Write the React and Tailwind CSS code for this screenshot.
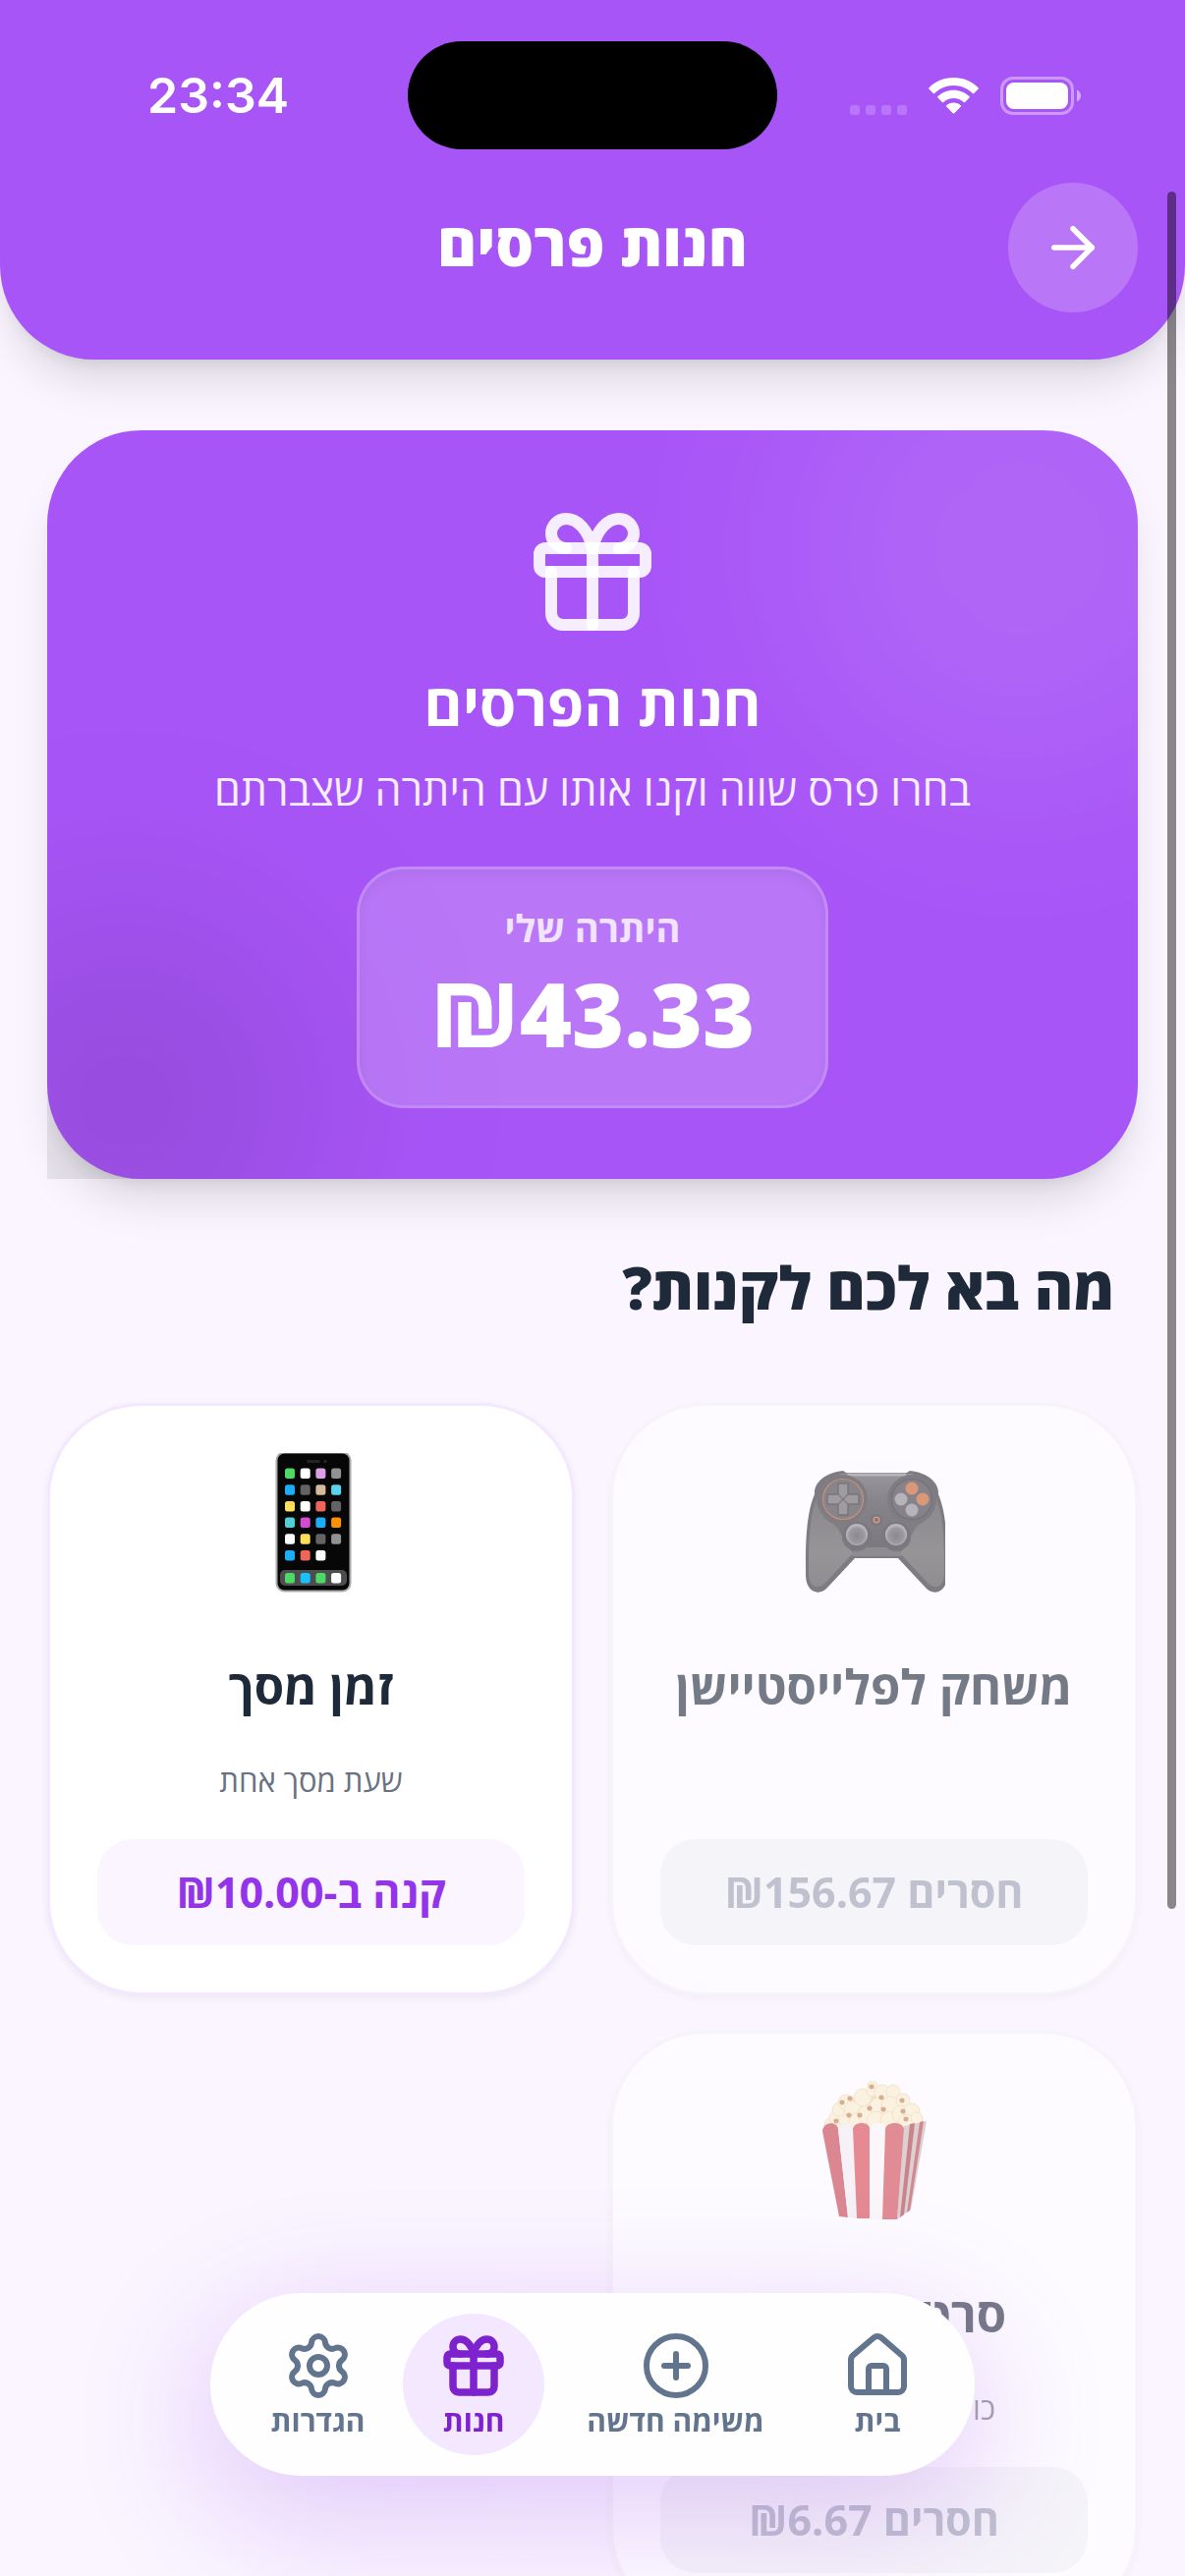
import { ArrowRight, CirclePlus, House, Settings } from "lucide-react";

const rewards = [
  {
    id: 1,
    title: "משחק לפלייסטיישן",
    desc: "",
    action: "חסרים ₪156.67",
    picture: Gamepad,
    locked: true,
  },
  {
    id: 2,
    title: "זמן מסך",
    desc: "שעת מסך אחת",
    action: "קנה ב-₪10.00",
    picture: Phone,
    locked: false,
  },
  {
    id: 3,
    title: "סרט בקולנוע",
    desc: "כולל פופקורן ושתייה",
    action: "חסרים ₪6.67",
    picture: Popcorn,
    locked: true,
  },
];

function GiftIcon({ className, strokeWidth = 2 }) {
  return (
    <svg
      viewBox="0 0 24 24"
      className={className}
      fill="none"
      stroke="currentColor"
      strokeWidth={strokeWidth}
      strokeLinecap="round"
      strokeLinejoin="round"
      aria-hidden="true"
    >
      <rect x="3" y="8" width="18" height="4" rx="1" />
      <path d="M12 8v13" />
      <path d="M19 12v7a2 2 0 0 1-2 2H7a2 2 0 0 1-2-2v-7" />
      <path d="M7.5 8a2.5 2.5 0 0 1 0-5A4.8 8 0 0 1 12 8a4.8 8 0 0 1 4.5-5 2.5 2.5 0 0 1 0 5" />
    </svg>
  );
}

function Phone() {
  const rows = [
    ["#4cd964", "#ffffff", "#dda0e6", "#929292"],
    ["#1badf8", "#636366", "#d4bb9c", "#5ad4ee"],
    ["#ffdf5c", "#ffffff", "#ee6559", "#636366"],
    ["#4dd0d8", "#d24bd0", "#1badf8", "#ff9000"],
    ["#ffffff", "#ffdf5c", "#636366", "#929292"],
    ["#1badf8", "#ee6559", "#ffffff"],
  ];
  const dock = ["#4cd964", "#18c1f8", "#4cd964", "#ffffff"];
  return (
    <svg viewBox="-2 4 144 144" className="size-36" aria-hidden="true">
      <rect x="33.5" y="2.5" width="77" height="143" rx="9" fill="#a9a9ab" />
      <rect x="35.5" y="4.5" width="73" height="139" rx="7" fill="#070707" />
      <rect x="65" y="11" width="14" height="3" rx="1.5" fill="#242424" />
      <circle cx="84" cy="12.5" r="1.8" fill="#242424" />
      <rect x="38" y="123" width="68" height="16" rx="5" fill="#4d4d4f" />
      {rows.map((row, y) =>
        row.map((color, x) => (
          <rect
            key={`${x}-${y}`}
            x={43 + x * 15.7}
            y={19.5 + y * 16.7}
            width="10"
            height="10.5"
            rx="2.5"
            fill={color}
          />
        ))
      )}
      {dock.map((color, x) => (
        <rect key={x} x={43 + x * 15.7} y="126" width="10" height="10.5" rx="2.5" fill={color} />
      ))}
    </svg>
  );
}

function Gamepad() {
  return (
    <svg viewBox="-2 0 144 144" className="size-36" aria-hidden="true">
      <defs>
        <linearGradient id="padBody" x1="0" y1="0" x2="0" y2="1">
          <stop offset="0" stopColor="#56575a" />
          <stop offset="0.4" stopColor="#3a3a3d" />
          <stop offset="1" stopColor="#28282b" />
        </linearGradient>
        <linearGradient id="padGrip" x1="0" y1="0" x2="0" y2="1">
          <stop offset="0" stopColor="#414142" />
          <stop offset="0.6" stopColor="#555552" />
          <stop offset="1" stopColor="#4a4a48" />
        </linearGradient>
        <radialGradient id="padStick" cx="0.5" cy="0.55" r="0.5">
          <stop offset="0" stopColor="#434345" />
          <stop offset="0.7" stopColor="#5e5e60" />
          <stop offset="1" stopColor="#939396" />
        </radialGradient>
      </defs>
      <path
        d="M9 42C8 30 20 20 38 18L41 20H103L106 18C124 20 136 30 135 42C141 56 144 76 144 112V124C144 142 130 146 122 137L94 107H50L22 137C14 146 0 142 0 124V112C0 76 3 56 9 42Z"
        fill="#2c2c2d"
      />
      <path
        d="M11 46C5 62 3 82 3 112V123C3 136 13 140 20 132L48 102L32 74C20 70 12 60 11 46Z"
        fill="url(#padGrip)"
      />
      <path
        d="M133 46C139 62 141 82 141 112V123C141 136 131 140 124 132L96 102L112 74C124 70 132 60 133 46Z"
        fill="url(#padGrip)"
      />
      <path d="M36 21H108L130 40V60L112 76L100 96H44L32 76L14 60V40Z" fill="url(#padBody)" />
      <path d="M50 96H94L98 105H46Z" fill="#474748" />
      <path d="M42 22H102" stroke="#8b8d90" strokeWidth="3" />
      <circle cx="38" cy="47" r="25" fill="#2f2f32" />
      <circle cx="38" cy="47" r="20.5" fill="#3b3b3e" stroke="#a34d22" strokeWidth="1.2" />
      <path
        d="M33 31h10v11h11v10h-11v11h-10v-11h-11v-10h11z"
        fill="#62625f"
        stroke="#232326"
        strokeWidth="1.5"
        strokeLinejoin="round"
      />
      <path d="M33 42l10 10M43 42l-10 10" stroke="#2c2c2e" strokeWidth="1.2" />
      <circle cx="108" cy="47" r="25" fill="#2f2f32" />
      <circle cx="108" cy="47" r="20.5" fill="#39393c" stroke="#1f1f22" strokeWidth="1.5" />
      <circle cx="108" cy="36" r="6.5" fill="#c55c20" />
      <circle cx="119" cy="47" r="6.5" fill="#c55c20" />
      <circle cx="97" cy="47" r="6.5" fill="#89898d" />
      <circle cx="108" cy="58" r="6.5" fill="#89898d" />
      <circle cx="72" cy="68" r="6" fill="#28282b" />
      <circle cx="72" cy="68" r="2.8" fill="none" stroke="#b95c2e" strokeWidth="1.6" />
      <circle cx="52" cy="85" r="15" fill="#28282b" />
      <circle cx="92" cy="85" r="15" fill="#28282b" />
      <circle cx="52" cy="83" r="11" fill="url(#padStick)" />
      <circle cx="92" cy="83" r="11" fill="url(#padStick)" />
    </svg>
  );
}

function Popcorn() {
  const kernels = [
    [29, 45, 8], [33, 38, 7], [44, 38, 9], [36, 29, 7], [43, 22, 8], [50, 30, 9], [56, 42, 10],
    [65, 34, 10], [60, 17, 9], [70, 5, 5], [69, 11, 5], [80, 12, 8], [76, 26, 9], [74, 41, 10],
    [91, 11, 7], [89, 26, 10], [87, 40, 9], [101, 20, 7], [99, 34, 9], [110, 31, 8],
    [104, 42, 8], [115, 38, 6],
  ];
  const husks = [[39, 22], [47, 18], [69, 6], [33, 41], [46, 35], [57, 35], [67, 28], [81, 29], [79, 17], [100, 20], [101, 31], [104, 39]];
  return (
    <svg viewBox="0 0 144 144" className="size-36" aria-hidden="true">
      <path d="M24 46L36 26L60 12L92 10L110 26L122 46Z" fill="#e9d79f" />
      {kernels.map(([x, y, r]) => (
        <circle key={`${x}-${y}`} cx={x} cy={y} r={r} fill="#fbf0cc" stroke="#e6d29c" strokeWidth="0.8" />
      ))}
      {husks.map(([x, y]) => (
        <ellipse key={`${x}-${y}`} cx={x} cy={y} rx="2.6" ry="2.4" fill="#bf8248" />
      ))}
      <path d="M102 46L125 41L109 131L95 141Z" fill="#c9bab2" />
      <path d="M108 44L113 43L102 136L98 139Z" fill="#a83843" />
      <path d="M118 42L122 41L108 132L105 134Z" fill="#b8404b" />
      <path d="M19 51C20 41 34 41 35 49L45 139L36 138Z" fill="#c53f4b" />
      <path d="M35 49C36 41 49 41 50 49L54 140L45 139Z" fill="#f3f0f2" />
      <path d="M50 49C51 41 67 41 67 49V140L54 140Z" fill="#d8424b" />
      <path d="M67 49C68 41 83 41 83 49L80 141H67Z" fill="#fbf7f6" />
      <path d="M83 49C84 41 101 41 102 49L95 141H80Z" fill="#d14650" />
    </svg>
  );
}

function StatusBar() {
  return (
    <div dir="ltr" className="grid grid-cols-[1fr_376px_1fr] items-center pt-[42px]">
      <time className="pl-[150px] font-['Inter'] text-[50px] leading-none font-semibold">23:34</time>
      <div className="h-[110px] rounded-full bg-black" />
      <div className="flex items-center justify-end gap-[22px] pr-[106px]">
        <div className="flex gap-1.5 self-end">
          <span className="size-2.5 rounded-[3px] bg-white/20" />
          <span className="size-2.5 rounded-[3px] bg-white/20" />
          <span className="size-2.5 rounded-[3px] bg-white/20" />
          <span className="size-2.5 rounded-[3px] bg-white/20" />
        </div>
        <svg viewBox="0 0 51 37" className="h-[37px] w-[51px]" fill="currentColor" aria-hidden="true">
          <path d="M25.5 0C35.5 0 44.5 4 50.5 10.3a1 1 0 0 1 0 1.4l-4.3 4.3a1 1 0 0 1-1.4 0C40 11 33 8 25.5 8S11 11 6.2 16a1 1 0 0 1-1.4 0L.5 11.7a1 1 0 0 1 0-1.4C6.5 4 15.5 0 25.5 0Z" />
          <path d="M25.5 12.8c6.2 0 11.8 2.4 16 6.3a1 1 0 0 1 0 1.5l-4.4 4.3a1 1 0 0 1-1.4 0c-2.7-2.5-6.2-4-10.2-4s-7.5 1.5-10.2 4a1 1 0 0 1-1.4 0l-4.4-4.3a1 1 0 0 1 0-1.5c4.2-3.9 9.8-6.3 16-6.3Z" />
          <path d="M25.5 25.6c2.8 0 5.3 1 7.2 2.6a1 1 0 0 1 0 1.5l-6.5 6.5a1 1 0 0 1-1.4 0l-6.5-6.5a1 1 0 0 1 0-1.5c1.9-1.6 4.4-2.6 7.2-2.6Z" />
        </svg>
        <svg viewBox="0 0 82 39" className="h-[39px] w-[82px]" aria-hidden="true">
          <rect x="1.5" y="1.5" width="72" height="36" rx="11.5" fill="none" stroke="#fff" strokeOpacity="0.4" strokeWidth="3" />
          <rect x="6" y="6" width="63" height="27" rx="8" fill="#fff" />
          <path d="M78 13.5c2.5 1 4 3.4 4 6s-1.5 5-4 6z" fill="#fff" fillOpacity="0.5" />
        </svg>
      </div>
    </div>
  );
}

function Header() {
  return (
    <header className="relative z-10 rounded-b-[96px] bg-[#a855f7] pb-12 text-white shadow-[0_30px_45px_-9px_rgba(0,0,0,0.12),0_12px_18px_-12px_rgba(0,0,0,0.12)]">
      <StatusBar />
      <div className="mt-[34px] grid grid-cols-[132px_1fr_132px] items-center px-12">
        <button
          type="button"
          aria-label="חזרה"
          className="flex size-[132px] items-center justify-center rounded-full bg-white/20"
        >
          <ArrowRight className="size-[66px]" />
        </button>
        <h1 className="pb-2 text-center text-[61px] leading-[84px] font-extrabold">חנות פרסים</h1>
      </div>
    </header>
  );
}

function BalanceCard() {
  return (
    <section className="relative rounded-[96px] bg-[#a855f7] text-white shadow-[0_30px_45px_-9px_rgba(0,0,0,0.12),0_12px_18px_-12px_rgba(0,0,0,0.12)]">
      <div className="absolute inset-0 overflow-hidden rounded-[96px] rounded-bl-none">
        <div className="absolute -top-30 -right-30 size-[480px] rounded-full bg-white/10 blur-[100px]" />
        <div className="absolute -bottom-30 -left-30 size-[400px] rounded-full bg-black/10 blur-[100px]" />
      </div>
      <div className="relative flex flex-col items-center px-12 py-[72px]">
        <GiftIcon className="size-36 text-white/90" />
        <h2 className="mt-5 text-[60px] leading-[84px] font-bold">חנות הפרסים</h2>
        <p className="mt-4 text-[43px] leading-[60px] text-white/90">
          בחרו פרס שווה וקנו אותו עם היתרה שצברתם
        </p>
        <div className="mt-12 flex flex-col items-center rounded-[48px] border-3 border-white/15 bg-white/20 px-[72px] pt-8 pb-[34px] shadow-[inset_0_6px_12px_rgba(0,0,0,0.05)]">
          <p className="text-[38px] leading-[54px] font-bold text-white/80">היתרה שלי</p>
          <p className="text-[91px] leading-[120px] font-extrabold">₪43.33</p>
        </div>
      </div>
    </section>
  );
}

function RewardCard({ reward }) {
  const Picture = reward.picture;
  return (
    <article
      className={`flex flex-col items-center rounded-[96px] border-3 bg-white p-12 shadow-[0_3px_9px_rgba(0,0,0,0.06)] ${
        reward.locked ? "border-gray-100 opacity-60" : "border-[#f3e8ff]"
      }`}
    >
      <Picture />
      <h3 className="mt-[60px] text-center text-[49px] leading-[66px] font-bold whitespace-nowrap text-gray-800">
        {reward.title}
      </h3>
      <p className="mt-[39px] h-12 text-[31px] leading-[48px] text-gray-500">{reward.desc}</p>
      <button
        type="button"
        disabled={reward.locked}
        className={`mt-9 h-[108px] w-full rounded-[36px] text-[43px] font-bold ${
          reward.locked ? "bg-gray-100 text-gray-400" : "bg-[#faf5ff] text-[#9333ea]"
        }`}
      >
        {reward.action}
      </button>
    </article>
  );
}

function BottomNav() {
  return (
    <nav className="fixed bottom-[102px] left-1/2 z-20 flex -translate-x-1/2 gap-2 rounded-full bg-[#fefefe] py-[21px] pr-[27px] pl-[31px] text-[30px] leading-9 font-bold text-slate-500 shadow-[0_36px_130px_10px_rgba(147,51,234,0.22)]">
      <a href="#home" className="flex size-36 flex-col items-center justify-center gap-0.5">
        <House className="size-[72px]" />
        בית
      </a>
      <a href="#new" className="flex h-36 w-[251px] flex-col items-center justify-center gap-0.5">
        <CirclePlus className="size-[72px]" />
        משימה חדשה
      </a>
      <a
        href="#shop"
        aria-current="page"
        className="flex size-36 flex-col items-center justify-center gap-0.5 rounded-full bg-[#f3e8ff] text-[#7e22ce]"
      >
        <GiftIcon className="size-[72px]" strokeWidth={2.5} />
        חנות
      </a>
      <a href="#settings" className="flex h-36 w-[157px] flex-col items-center justify-center gap-0.5">
        <Settings className="size-[72px]" />
        הגדרות
      </a>
    </nav>
  );
}

export default function App() {
  return (
    <div dir="rtl" className="relative h-screen overflow-hidden bg-[#faf5ff] font-['Open_Sans','Noto_Sans',sans-serif]">
      <Header />
      <main className="px-12 pt-[72px]">
        <BalanceCard />
        <h2 className="mt-[68px] px-6 text-[60px] leading-[84px] font-extrabold text-gray-800">
          מה בא לכם לקנות?
        </h2>
        <div className="mt-[76px] grid grid-cols-2 gap-9">
          {rewards.map((reward) => (
            <RewardCard key={reward.id} reward={reward} />
          ))}
        </div>
      </main>
      <div className="absolute top-[195px] right-[9px] z-30 h-2/3 w-[9px] rounded-full bg-black/45" />
      <BottomNav />
    </div>
  );
}
